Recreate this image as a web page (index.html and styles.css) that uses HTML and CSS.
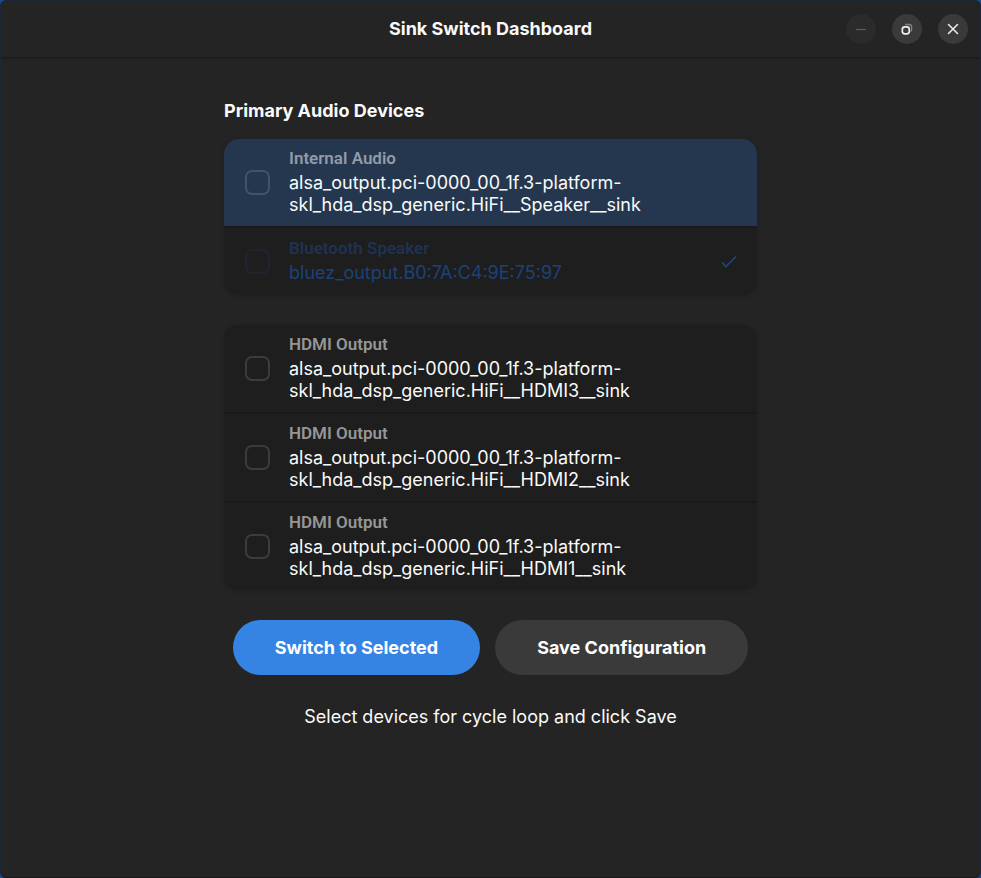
FILE: index.html
```html
<!DOCTYPE html>
<html lang="en">
<head>
<meta charset="utf-8">
<title>Sink Switch Dashboard</title>
<link rel="stylesheet" href="styles.css">
</head>
<body>
<div class="window">
  <header class="titlebar">
    <h1 class="title">Sink Switch Dashboard</h1>
    <div class="controls">
      <button class="control faded" type="button" aria-label="Minimize" disabled>
        <svg viewBox="0 0 30 30"><path d="M10 15.500h10" stroke-width="1.200"/></svg>
      </button>
      <button class="control" type="button" aria-label="Restore">
        <svg viewBox="0 0 30 30"><rect x="10.300" y="12.800" width="7" height="7" rx="2.600" stroke-width="1.700"/><path d="M13 10.500h4a2.600 2.600 0 0 1 2.600 2.600v2.400q0 1.500-1 2" stroke-width="1.300" opacity=".4"/></svg>
      </button>
      <button class="control" type="button" aria-label="Close">
        <svg viewBox="0 0 30 30"><path d="M10.500 10.500l9 9M19.500 10.500l-9 9" stroke-width="1.500" stroke-linecap="round"/></svg>
      </button>
    </div>
  </header>
  <main class="content">
    <h2 class="heading">Primary Audio Devices</h2>
    <div class="list">
      <label class="row selected">
        <input class="check" type="checkbox">
        <span class="text"><span class="kind">Internal Audio</span><span class="sink">alsa_output.pci-0000_00_1f.3-platform-skl_hda_dsp_generic.HiFi__Speaker__sink</span></span>
      </label>
      <label class="row active">
        <input class="check" type="checkbox" disabled>
        <span class="text"><span class="kind">Bluetooth Speaker</span><span class="sink">bluez_output.B0:7A:C4:9E:75:97</span></span>
        <svg class="tick" viewBox="0 0 16 16"><path d="M1 8.500l4 4L15 2.500"/></svg>
      </label>
    </div>
    <div class="list">
      <label class="row">
        <input class="check" type="checkbox">
        <span class="text"><span class="kind">HDMI Output</span><span class="sink">alsa_output.pci-0000_00_1f.3-platform-skl_hda_dsp_generic.HiFi__HDMI3__sink</span></span>
      </label>
      <label class="row">
        <input class="check" type="checkbox">
        <span class="text"><span class="kind">HDMI Output</span><span class="sink">alsa_output.pci-0000_00_1f.3-platform-skl_hda_dsp_generic.HiFi__HDMI2__sink</span></span>
      </label>
      <label class="row">
        <input class="check" type="checkbox">
        <span class="text"><span class="kind">HDMI Output</span><span class="sink">alsa_output.pci-0000_00_1f.3-platform-skl_hda_dsp_generic.HiFi__HDMI1__sink</span></span>
      </label>
    </div>
    <div class="actions">
      <button class="pill primary" type="button">Switch to Selected</button>
      <button class="pill" type="button">Save Configuration</button>
    </div>
    <p class="status">Select devices for cycle loop and click Save</p>
  </main>
</div>
</body>
</html>
```
FILE: styles.css
```css
* { box-sizing: border-box; }
html { background: #1c4a86; }
body {
  margin: 0;
  color: #fafafa;
  font: 18px/22px Inter, "Liberation Sans", sans-serif;
  font-optical-sizing: none;
}
h1, h2, p { margin: 0; }
.window {
  min-height: 100vh;
  border: 1px solid #1c2837;
  border-bottom-color: #191a1d;
  border-radius: 6px;
  background: #242424;
}
.titlebar {
  display: grid;
  grid-template-columns: 1fr auto 1fr;
  align-items: center;
  height: 58px;
  padding: 0 12px;
  border-bottom: 2px solid #1d1d1d;
}
.title {
  grid-column: 2;
  font-size: 18px;
  font-weight: 700;
}
.controls {
  display: flex;
  justify-content: flex-end;
  gap: 16px;
}
.control {
  width: 30px;
  height: 30px;
  padding: 0;
  border: 0;
  border-radius: 50%;
  background: #3a3a3a;
  color: #eee;
}
.control svg {
  display: block;
  fill: none;
  stroke: currentColor;
}
.faded {
  background: #2b2b2b;
  color: #5e5e5e;
}
.content {
  display: flex;
  flex-direction: column;
  gap: 30px;
  width: 533px;
  max-width: 100%;
  margin: 0 auto;
  padding: 41px 0;
}
.heading {
  margin-bottom: -13px;
  font-size: 18px;
  font-weight: 700;
}
.list {
  border-radius: 15px;
  background: #1e1e1e;
  box-shadow: 0 1px 4px 1px rgba(0, 0, 0, .12);
  overflow: hidden;
}
.row {
  display: flex;
  align-items: center;
  min-height: 69px;
  padding: 0 20px 0 21px;
}
.row + .row { border-top: 2px solid #191919; }
.check {
  appearance: none;
  flex: none;
  width: 25px;
  height: 25px;
  margin: 0 19px 0 0;
  border: 2px solid #3c3c3c;
  border-radius: 7px;
}
.text {
  flex: 1;
  display: flex;
  flex-direction: column;
  gap: 3px;
  padding: 8px 0 10px;
}
.kind {
  color: #969696;
  font: 600 17px/22px Roboto, sans-serif;
}
.sink { max-width: 400px; }
.selected { background: #25374e; }
.selected .kind { color: #929ba7; }
.selected .check { border-color: #435266; }
.active .kind { color: #1d3352; }
.active .sink { color: #1b4279; }
.active .check { border-color: #1f252f; }
.tick {
  width: 16px;
  height: 16px;
  fill: none;
  stroke: #1b4780;
  stroke-width: 1.6;
}
.actions {
  display: flex;
  justify-content: center;
  gap: 15px;
}
.pill {
  height: 55px;
  padding: 0 42px;
  border: 0;
  border-radius: 28px;
  background: #3a3a3a;
  color: #fff;
  font: 700 18px/22px Inter, "Liberation Sans", sans-serif;
  font-optical-sizing: none;
}
.primary { background: #3584e4; }
.status {
  line-height: 24px;
  text-align: center;
}
```
